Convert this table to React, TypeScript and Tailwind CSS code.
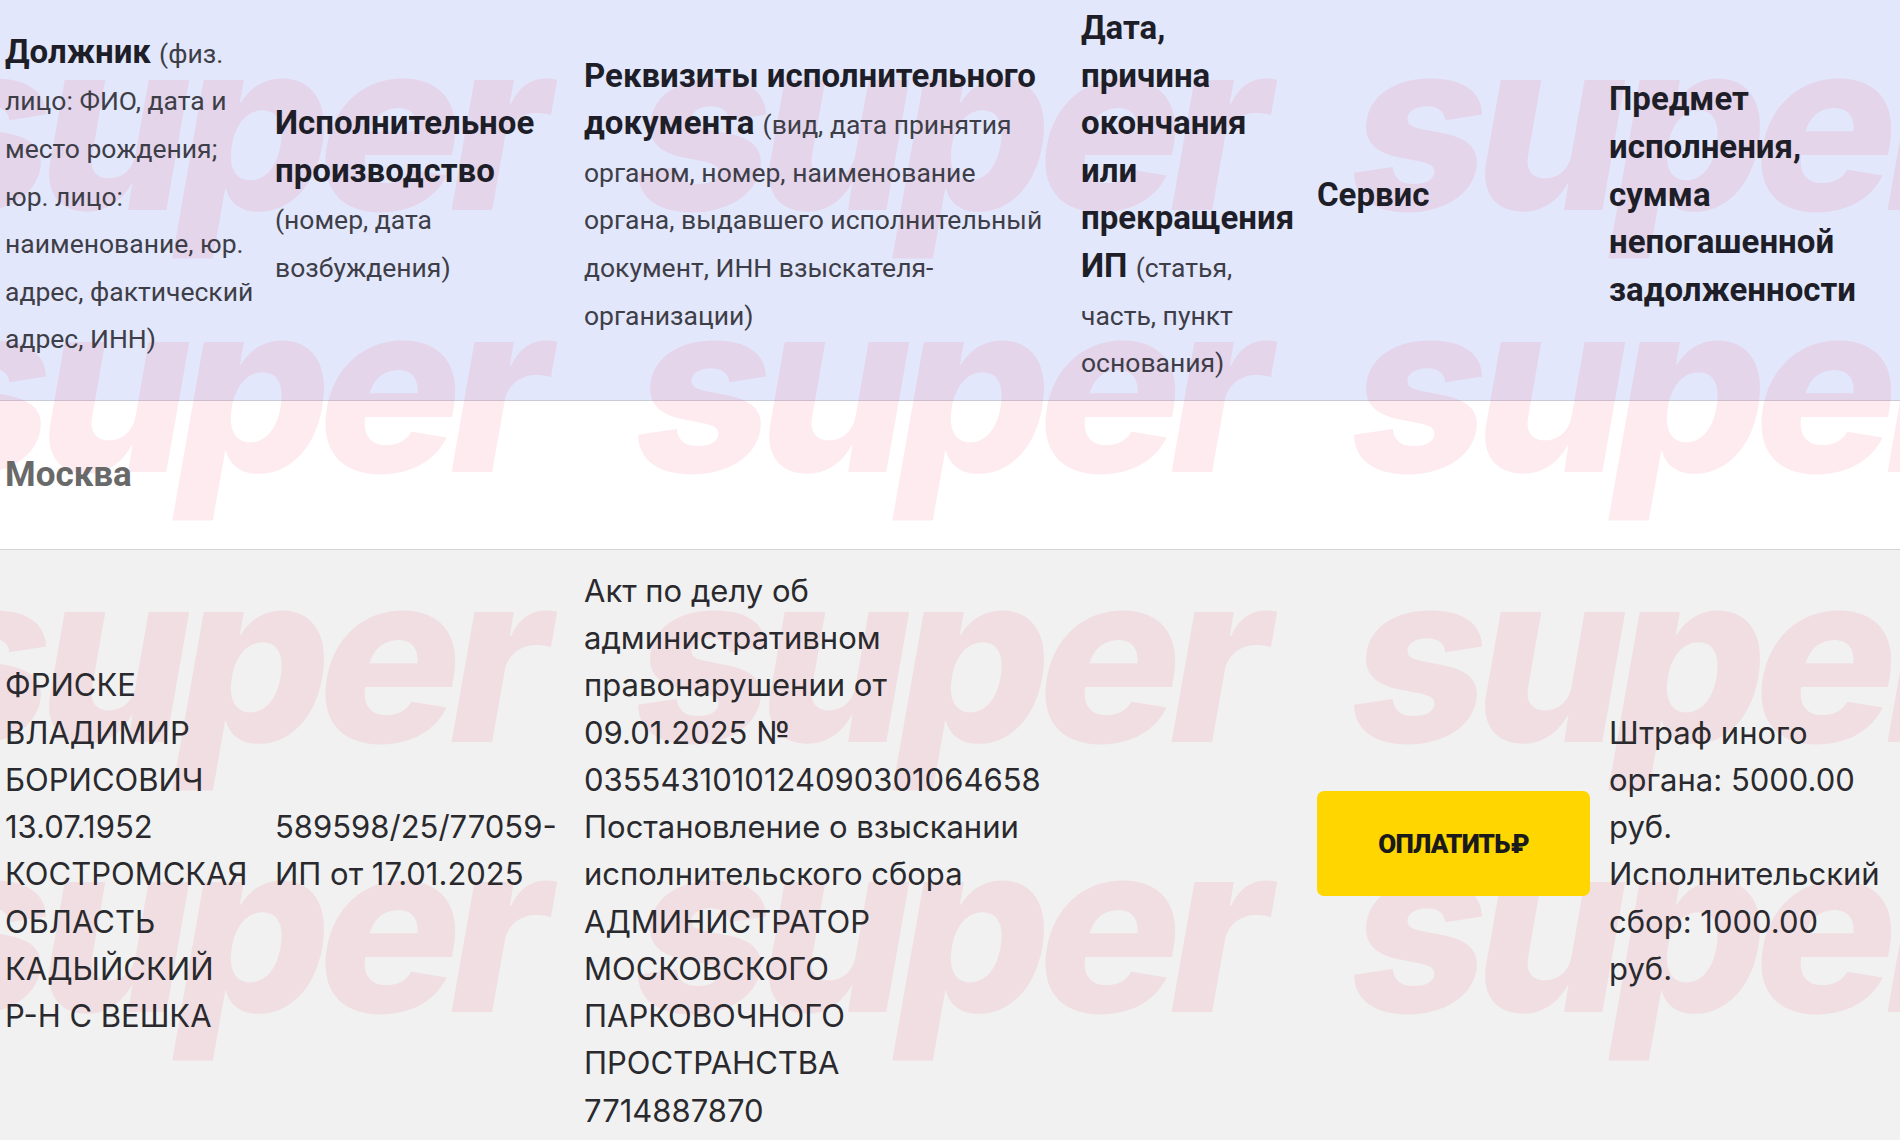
import React from "react";

const HB = "font-bold text-[33px] text-[#1e1e28]";
const HR = "font-normal text-[26.5px] text-[#3e3e48]";

function Lines({ lines, lineClass = "" }: { lines: React.ReactNode[]; lineClass?: string }) {
  return (
    <>
      {lines.map((l, i) => (
        <div key={i} className={`whitespace-nowrap ${lineClass}`}>
          {l}
        </div>
      ))}
    </>
  );
}

function B({ children }: { children: React.ReactNode }) {
  return <span className={HB}>{children}</span>;
}
function R({ children }: { children: React.ReactNode }) {
  return <span className={HR}>{children}</span>;
}

const HL = "h-[47.6px] text-[33px]";

function Watermark() {
  const rows = [210, 472, 742, 1012];
  const cols = [-96, 624, 1340];
  return (
    <svg
      className="absolute left-0 top-0 pointer-events-none"
      width={1900}
      height={1140}
      viewBox="0 0 1900 1140"
    >
      {rows.map((y) =>
        cols.map((x) => (
          <text
            key={`${x}-${y}`}
            transform={`translate(${x} ${y}) skewX(-10)`}
            x={0}
            y={0}
            fontFamily="Inter, sans-serif"
            fontWeight={800}
            fontSize={238}
            letterSpacing={-12}
            fill="rgba(240,40,90,0.095)"
          >
            super
          </text>
        ))
      )}
    </svg>
  );
}

export default function App() {
  const cols = "grid grid-cols-[270px_309px_497px_236px_292px_1fr]";
  return (
    <div className="relative w-[1900px] h-[1140px] overflow-hidden bg-white font-['Roboto',sans-serif]">
      {/* Header */}
      <div
        className={`${cols} items-center bg-[#e3e7fb] pt-[4px] pb-[15px] border-b border-[#c9ccd8] leading-[47.6px]`}
      >
        <div className="relative z-10 pl-[5px]">
          <Lines
            lineClass={HL}
            lines={[
              <>
                <B>Должник</B> <R>(физ.</R>
              </>,
              <R>лицо: ФИО, дата и</R>,
              <R>место рождения;</R>,
              <R>юр. лицо:</R>,
              <R>наименование, юр.</R>,
              <R>адрес, фактический</R>,
              <R>адрес, ИНН)</R>,
            ]}
          />
        </div>
        <div className="relative z-10 pl-[5px]">
          <Lines
            lineClass={HL}
            lines={[
              <B>Исполнительное</B>,
              <B>производство</B>,
              <R>(номер, дата</R>,
              <R>возбуждения)</R>,
            ]}
          />
        </div>
        <div className="relative z-10 pl-[5px]">
          <Lines
            lineClass={HL}
            lines={[
              <B>Реквизиты исполнительного</B>,
              <>
                <B>документа</B> <R>(вид, дата принятия</R>
              </>,
              <R>органом, номер, наименование</R>,
              <R>органа, выдавшего исполнительный</R>,
              <R>документ, ИНН взыскателя-</R>,
              <R>организации)</R>,
            ]}
          />
        </div>
        <div className="relative z-10 pl-[5px]">
          <Lines
            lineClass={HL}
            lines={[
              <B>Дата,</B>,
              <B>причина</B>,
              <B>окончания</B>,
              <B>или</B>,
              <B>прекращения</B>,
              <>
                <B>ИП</B> <R>(статья,</R>
              </>,
              <R>часть, пункт</R>,
              <R>основания)</R>,
            ]}
          />
        </div>
        <div className="relative z-10 pl-[5px]">
          <Lines lineClass={HL} lines={[<B>Сервис</B>]} />
        </div>
        <div className="relative z-10 pl-[5px]">
          <Lines
            lineClass={HL}
            lines={[
              <B>Предмет</B>,
              <B>исполнения,</B>,
              <B>сумма</B>,
              <B>непогашенной</B>,
              <B>задолженности</B>,
            ]}
          />
        </div>
      </div>

      {/* Region row */}
      <div className="h-[149px] flex items-center border-b border-[#d4d4d4] bg-white">
        <div className="relative z-10 pl-[5px] font-bold text-[35px] leading-none text-[#696969]">
          Москва
        </div>
      </div>

      {/* Data row */}
      <div
        className={`${cols} items-center bg-[#f1f1f1] pt-[17px] pb-[17px] leading-[47.25px] font-['Inter',sans-serif] text-[31px] text-[#2a2a2e]`}
      >
        <div className="relative z-10 pl-[5px]">
          <Lines
            lines={[
              "ФРИСКЕ",
              "ВЛАДИМИР",
              "БОРИСОВИЧ",
              "13.07.1952",
              "КОСТРОМСКАЯ",
              "ОБЛАСТЬ",
              "КАДЫЙСКИЙ",
              "Р-Н С ВЕШКА",
            ]}
          />
        </div>
        <div className="relative z-10 pl-[5px]">
          <Lines lines={["589598/25/77059-", "ИП от 17.01.2025"]} />
        </div>
        <div className="relative z-10 pl-[5px]">
          <Lines
            lines={[
              "Акт по делу об",
              "административном",
              "правонарушении от",
              "09.01.2025 №",
              "0355431010124090301064658",
              "Постановление о взыскании",
              "исполнительского сбора",
              "АДМИНИСТРАТОР",
              "МОСКОВСКОГО",
              "ПАРКОВОЧНОГО",
              "ПРОСТРАНСТВА",
              "7714887870",
            ]}
          />
        </div>
        <div className="relative z-10 pl-[5px]">
          <span />
        </div>
        <div className="relative z-10 pl-[5px]">
          <button className="mb-[13px] flex h-[105px] w-[273px] items-center justify-center rounded-[7px] bg-[#ffd600] font-['Roboto',sans-serif] text-[26px] font-black leading-none tracking-[-0.8px] text-[#1a1a1a]">
            ОПЛАТИТЬ<span className="ml-[1px]">₽</span>
          </button>
        </div>
        <div className="relative z-10 pl-[5px]">
          <Lines
            lines={[
              "Штраф иного",
              "органа: 5000.00",
              "руб.",
              "Исполнительский",
              "сбор: 1000.00",
              "руб.",
            ]}
          />
        </div>
      </div>

      <Watermark />
    </div>
  );
}
